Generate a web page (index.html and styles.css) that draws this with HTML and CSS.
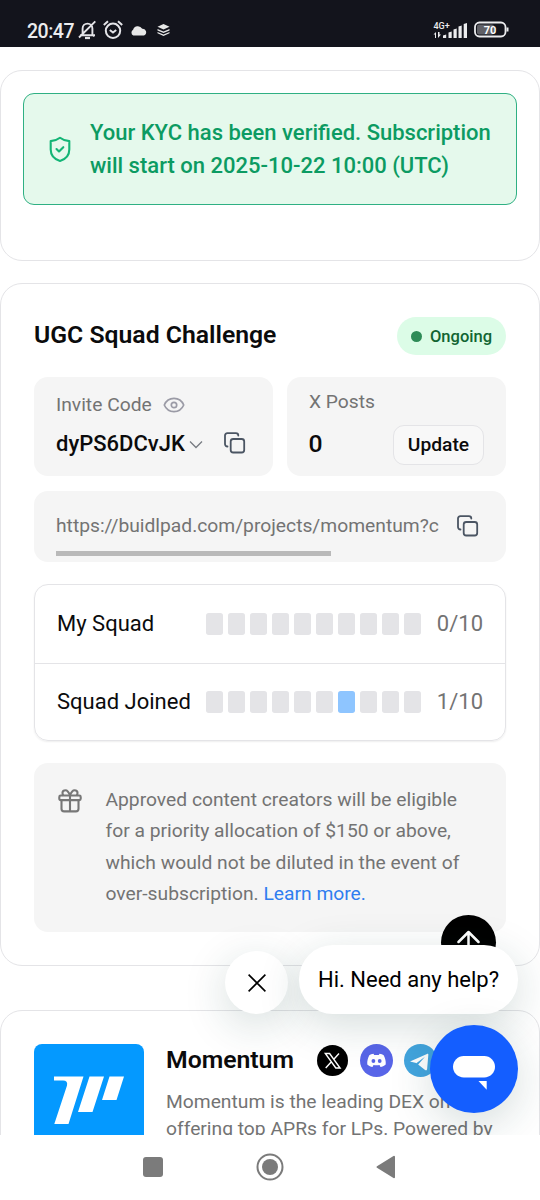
FILE: index.html
```html
<!DOCTYPE html>
<html lang="en">
<head>
<meta charset="utf-8">
<title>Momentum – Buidlpad</title>
<link rel="stylesheet" href="styles.css">
</head>
<body>
<div class="phone">
  <header class="status">
    <div class="status-left">
      <span class="clock">20:47</span>
      <svg class="bell" width="19" height="20" viewBox="0 0 19 20" fill="none" stroke="#e4e4e8" stroke-width="1.9"><path d="M2 15.200h15M4.600 15V8.500a4.900 4.900 0 0 1 9.800 0V15l2 1.200M1 17.500 17.300 1.300"/><path d="M7 18h5" stroke-width="2.200"/></svg>
      <svg class="alarm" width="20" height="20" viewBox="0 0 20 20" fill="none" stroke="#e4e4e8" stroke-width="2"><circle cx="10" cy="10.800" r="7.200"/><path d="M.8 5 5 1.300M19.200 5 15 1.300M6.800 10l3.200 2.500 3.200-2.500"/></svg>
      <svg class="cloud" width="17" height="11" viewBox="0 0 17 11" fill="#e8e8e8"><path d="M3.300 10.500A3.200 3.200 0 0 1 3.100 4.800 5 5 0 0 1 12.200 3.800 3.500 3.500 0 0 1 14 10.500z"/></svg>
      <svg class="layers" width="13" height="12" viewBox="0 0 13 12" fill="#e8e8e8"><path d="M6.500 0 12.500 2.800 6.500 5.600.5 2.800z"/><path d="M.5 5 6.500 7.500 12.500 5v1.500L6.500 9 .5 6.500zM.5 8 6.500 10.500 12.500 8v1.300L6.500 12 .5 9.300z"/></svg>
    </div>
    <div class="status-right">
      <svg width="36" height="20" viewBox="0 0 36 20"><text x="0.500" y="8.500" class="net">4G+</text><path fill="#ececee" d="M.5 14.500 3 12v6H2v-3.500zM5 12v6l3-3.400H6.500V12zM10 18v-2.500l3.200-1V18zM15.500 18v-5.500l3.200-1V18zM20.500 18V9.500l3.200-1V18zM25.500 18V6.500l3.200-1V18zM30.700 18V4L34 3v15z"/></svg>
      <svg width="36" height="18" viewBox="0 0 36 18"><rect x="1" y="1.500" width="30.500" height="14" rx="4.500" fill="none" stroke="#ececee" stroke-width="1.800"/><rect x="3" y="3.500" width="17" height="10" rx="2" fill="#606066"/><path d="M33.500 6.500v4" stroke="#ececee" stroke-width="2"/><text x="16" y="13" text-anchor="middle" class="bat">70</text></svg>
    </div>
  </header>

  <main class="page">
    <section class="card kyc-card">
      <div class="kyc">
        <svg width="22" height="27" viewBox="0 0 22 27" fill="none" stroke="#13b576" stroke-width="2.100" stroke-linecap="round" stroke-linejoin="round"><path d="M11 1.800c-2.500 2-5.700 3-9.300 3.300v8.400c0 5.800 3.600 9.700 9.300 11.500 5.700-1.800 9.300-5.700 9.300-11.500V5.100c-3.600-.3-6.800-1.300-9.300-3.300z"/><path d="m7.500 13 2.500 2.500 4.300-4.300"/></svg>
        <p>Your KYC has been verified. Subscription<br>will start on 2025-10-22 10:00 (UTC)</p>
      </div>
    </section>

    <section class="card squad-card">
      <div class="head">
        <h2>UGC Squad Challenge</h2>
        <span class="badge"><i></i>Ongoing</span>
      </div>
      <div class="panels">
        <div class="panel invite">
          <div class="label">Invite Code
            <svg width="22" height="16" viewBox="0 0 22 16" fill="none" stroke="#9b9ba6" stroke-width="1.700"><path d="M1.300 8C3 4 6.600 1.400 11 1.400S19 4 20.700 8C19 12 15.400 14.600 11 14.600S3 12 1.300 8z"/><circle cx="11" cy="8" r="2.700"/></svg>
          </div>
          <div class="code">dyPS6DCvJK
            <svg class="chev" width="14" height="9" viewBox="0 0 14 9" fill="none" stroke="#777b82" stroke-width="1.300"><path d="m1 1.500 6 6 6-6"/></svg>
            <svg class="copy" width="22" height="22" viewBox="0 0 22 22" fill="none" stroke="#4b5563" stroke-width="1.800" stroke-linecap="round" stroke-linejoin="round"><rect x="6.700" y="7" width="13.500" height="13.500" rx="2.500"/><path d="M3.500 14.500C2 14.500 1 13.600 1 12.100V3.600c0-1.500.9-2.400 2.400-2.400h8.500c1.500 0 2.400.9 2.400 2.400"/></svg>
          </div>
        </div>
        <div class="panel posts">
          <div class="label">X Posts</div>
          <div class="count"><b>0</b><button type="button">Update</button></div>
        </div>
      </div>
      <div class="panel link">
        <div class="url-row">
          <span class="url">https://buidlpad.com/projects/momentum?c</span>
          <svg class="copy" width="22" height="22" viewBox="0 0 22 22" fill="none" stroke="#4b5563" stroke-width="1.800" stroke-linecap="round" stroke-linejoin="round"><rect x="6.700" y="7" width="13.500" height="13.500" rx="2.500"/><path d="M3.500 14.500C2 14.500 1 13.600 1 12.100V3.600c0-1.500.9-2.400 2.400-2.400h8.500c1.500 0 2.400.9 2.400 2.400"/></svg>
        </div>
        <div class="scrollbar"></div>
      </div>
      <div class="table">
        <div class="row"><span class="name">My Squad</span><span class="cells"><i></i><i></i><i></i><i></i><i></i><i></i><i></i><i></i><i></i><i></i></span><span class="num">0/10</span></div>
        <div class="row"><span class="name">Squad Joined</span><span class="cells"><i></i><i></i><i></i><i></i><i></i><i></i><i class="on"></i><i></i><i></i><i></i></span><span class="num">1/10</span></div>
      </div>
      <div class="panel note">
        <svg width="24" height="24" viewBox="0 0 24 24" fill="none" stroke="#777" stroke-width="2.100" stroke-linejoin="round"><rect x="1.300" y="6.500" width="21.400" height="4.600" rx="1.400"/><path d="M3.500 11.100v8.700c0 1.700.9 2.600 2.600 2.600h11.800c1.700 0 2.600-.9 2.600-2.600v-8.700M12 6.500v15.900M12 6.500C10.800 3.300 9.300 1.200 7.500 1.200 5.700 1.200 4.500 2.200 4.500 3.800c0 1 .2 2 .8 2.700M12 6.500C13.200 3.300 14.700 1.200 16.500 1.200c1.800 0 3 1 3 2.600 0 1-.2 2-.8 2.700"/></svg>
        <p>Approved content creators will be eligible<br>for a priority allocation of $150 or above,<br>which would not be diluted in the event of<br>over-subscription. <a>Learn more.</a></p>
      </div>
    </section>

    <section class="card project">
      <svg class="logo" width="110" height="110" viewBox="0 0 110 110"><rect width="110" height="110" rx="8" fill="#0499ff"/><path fill="#fff" d="M20 32.500H49.500L34.500 80H20.300L33 41.500Q34 36.500 29 36.500H20zM55.500 32.500H70L58.500 68H44zM75.500 32.500H90L82.500 56H68z"/></svg>
      <div class="info">
        <div class="title-row">
          <h2>Momentum</h2>
          <svg class="x-icon" width="32" height="32" viewBox="0 0 32 32"><circle cx="15.500" cy="15.500" r="15.500"/><path d="M8.300 8.500h4.300l10.500 14.500h-4.300zM22 8.500l-5.600 6.200M14.400 16.800 8.700 23" fill="none" stroke="#fff" stroke-width="1.400"/></svg>
          <svg width="33" height="33" viewBox="0 0 33 33"><circle cx="16.500" cy="16.500" r="16.500" fill="#5865e8"/><path fill="#fff" d="M13.500 9.800C11.700 10 10.300 10.500 9.300 11.200 7.800 14 7 17 7.300 20.500 9 22 10.800 22.700 12.500 23l1-2c2 .4 4 .4 6 0l1 2c1.700-.3 3.500-1 5.200-2.500.3-3.500-.5-6.500-2-9.300-1-.7-2.400-1.200-4.200-1.400l-.7 1.200h-4.600z"/><ellipse cx="13.400" cy="17" rx="1.900" ry="2.100" fill="#5865e8"/><ellipse cx="19.700" cy="17" rx="1.900" ry="2.100" fill="#5865e8"/></svg>
          <svg width="33" height="33" viewBox="0 0 33 33"><circle cx="16.500" cy="16.500" r="16.500" fill="#43a5df"/><path fill="#fff" d="M6 17.500 23 9.900c1-.3 1.500.1 1.300 1.300l-1.200 14c-.3 1.200-1.100 1.400-2 .9L12.200 19z"/><path d="m12.300 19.300 8.700-6.500-6.800 7.800-.4 3.400z" fill="#43a5df"/></svg>
        </div>
        <p>Momentum is the leading DEX on Sui,<br>offering top APRs for LPs. Powered by</p>
      </div>
    </section>
  </main>

  <div class="to-top"><svg width="24" height="28" viewBox="0 0 24 28" fill="none" stroke="#fff" stroke-width="2.500" stroke-linecap="round" stroke-linejoin="round"><path d="M11.500 26V2M1.500 12l10-10 10 10"/></svg></div>
  <div class="close"><svg width="18" height="18" viewBox="0 0 18 18" stroke="#000" stroke-width="1.600"><path d="m.6.6 16.800 16.800M17.400.6.600 17.400"/></svg></div>
  <div class="bubble">Hi. Need any help?</div>
  <div class="launcher"><svg width="44" height="36" viewBox="0 0 44 36" fill="#fff"><rect x="1" y="1" width="42" height="21.500" rx="10.750"/><path d="M26.500 26h8.200v8.800z"/></svg></div>

  <nav class="nav">
    <svg width="20" height="20" viewBox="0 0 20 20"><rect width="20" height="20" rx="3" fill="#7b7b7b"/></svg>
    <svg width="28" height="28" viewBox="0 0 28 28"><circle cx="14" cy="14" r="12.500" fill="none" stroke="#7b7b7b" stroke-width="2"/><circle cx="14" cy="14" r="8" fill="#7b7b7b"/></svg>
    <svg width="20" height="24" viewBox="0 0 20 24"><path d="M1.500 12 18 1.800v20.400z" fill="#7b7b7b" stroke="#7b7b7b" stroke-width="2" stroke-linejoin="round"/></svg>
  </nav>
</div>
</body>
</html>
```
FILE: styles.css
```css
* { box-sizing: border-box; }
body { margin: 0; background: #fff; font-family: Roboto, "Liberation Sans", sans-serif; color: #0b0b0c; }
h2, p { margin: 0; }
svg { display: block; flex: none; }
.phone { position: relative; width: 540px; height: 1200px; overflow: hidden; display: flex; flex-direction: column; }

.status { height: 46.500px; flex: none; background: #13141c; display: flex; justify-content: space-between; padding: 20px 30px 0 27px; color: #ececee; }
.status-left, .status-right { display: flex; align-items: center; height: 20px; }
.clock { font-size: 19.500px; font-weight: 500; line-height: 20px; width: 51px; letter-spacing: -.5px; padding-top: 3px; }
.alarm { margin-left: 6px; }
.cloud { margin-left: 7px; }
.layers { margin-left: 10px; }
.status-right { gap: 5px; }
.net { font-size: 9px; font-weight: 500; fill: #ececee; }
.bat { font-size: 11px; font-weight: 700; fill: #fff; }

.page { flex: 1; min-height: 0; overflow: hidden; padding-top: 23.500px; display: flex; flex-direction: column; }
.card { flex: none; border: 1px solid #e4e4e7; border-radius: 22px; background: #fff; }
.kyc-card { height: 191px; padding: 22px; }
.kyc { height: 112px; border: 1px solid #2fb083; border-radius: 11px; background: #e5f9ec; display: flex; align-items: center; padding: 0 25px; gap: 19px; }
.kyc p { font-size: 22px; line-height: 33px; font-weight: 500; color: #0c9b62; white-space: nowrap; }

.squad-card { margin-top: 22px; height: 683px; padding: 33px; display: flex; flex-direction: column; }
.head { display: flex; justify-content: space-between; align-items: center; height: 38px; }
.head h2, .title-row h2 { font-size: 24.750px; font-weight: 600; line-height: 34px; white-space: nowrap; padding-bottom: 2px; }
.badge { height: 38px; width: 109px; border-radius: 19px; background: #dcfce7; color: #116532; font-size: 16.500px; font-weight: 500; display: flex; align-items: center; gap: 8px; padding-left: 14px; }
.badge i { width: 11px; height: 11px; border-radius: 50%; background: #2e8b57; }
.panels { display: grid; grid-template-columns: 239px 219px; gap: 14px; margin-top: 22px; }
.panel { background: #f5f5f5; border-radius: 14px; padding: 0 22px; }
.panels .panel { height: 99px; }
.label { font-size: 19.250px; line-height: 28px; color: #737373; display: flex; align-items: center; gap: 11px; white-space: nowrap; }
.invite .label { padding-top: 13.500px; }
.posts .label { padding-top: 11px; }
.code { display: flex; align-items: center; font-size: 22px; line-height: 33px; font-weight: 500; margin-top: 8px; white-space: nowrap; }
.chev { margin: 2px 0 0 4px; }
.code .copy { margin-left: 21px; }
.count { display: flex; align-items: center; justify-content: space-between; margin-top: 9px; }
.count b { font-size: 24.750px; font-weight: 500; padding-bottom: 3px; margin-left: -.5px; }
.count button { width: 91px; height: 40px; border: 1px solid #e4e4e7; border-radius: 11px; background: #f8f8f8; font: 500 19.250px Roboto, sans-serif; color: #0b0b0c; padding: 0 0 2px; }
.link { margin-top: 14.500px; height: 71.500px; padding-top: 21.500px; }
.url-row { display: flex; align-items: center; justify-content: space-between; height: 27px; padding-right: 5px; }
.url { font-size: 19.250px; color: #737373; white-space: nowrap; }
.scrollbar { width: 274.500px; height: 5.500px; margin-top: 11.500px; background: #b9b9b9; }
.table { margin-top: 22px; height: 157px; border: 1px solid #e4e4e7; border-radius: 14px; box-shadow: 0 1px 2px rgba(0,0,0,.07); }
.row { height: 77.500px; display: flex; align-items: center; padding: 0 22px; font-size: 22px; white-space: nowrap; }
.row + .row { border-top: 1px solid #e4e4e7; height: 77.500px; }
.name { width: 149px; }
.cells { display: flex; gap: 5.500px; }
.cells i { width: 16.500px; height: 22px; border-radius: 2.750px; background: #e4e4e7; }
.cells .on { background: #8ec5ff; }
.num { margin-left: auto; color: #737373; }
.note { margin-top: 22px; height: 169px; display: flex; gap: 23.500px; padding: 21px 24px; }
.note svg { margin-top: 4.500px; }
.note p { font-size: 19.250px; line-height: 31.300px; color: #737373; white-space: nowrap; }
.note a { color: #2f7df0; }

.project { margin-top: 44px; height: 240px; padding: 33px; display: flex; gap: 22px; }
.title-row { display: flex; align-items: center; height: 33px; gap: 11px; }
.title-row .x-icon { margin-left: 12px; }
.info p { font-size: 19.250px; line-height: 27.500px; color: #737373; margin-top: 10.500px; white-space: nowrap; }

.to-top { position: absolute; left: 441px; top: 915px; width: 55px; height: 55px; border-radius: 50%; background: #000; display: flex; justify-content: center; padding-top: 15px; }
.close, .bubble, .launcher { position: absolute; display: flex; align-items: center; justify-content: center; box-shadow: 0 11px 44px rgba(20,65,60,.18); }
.close { left: 225px; top: 951px; width: 63px; height: 63px; border-radius: 50%; background: #fff; }
.bubble { left: 299px; top: 945px; width: 219px; height: 69px; border-radius: 34px; background: #fff; color: #000; font-size: 22px; white-space: nowrap; }
.launcher { left: 430px; top: 1025px; width: 88px; height: 88px; border-radius: 50%; background: #145eff; padding-top: 8px; }

.nav { position: absolute; left: 0; right: 0; bottom: 0; height: 65px; background: #fff; display: flex; align-items: center; padding: 0 0 1px 143px; gap: 92.500px; }
```
